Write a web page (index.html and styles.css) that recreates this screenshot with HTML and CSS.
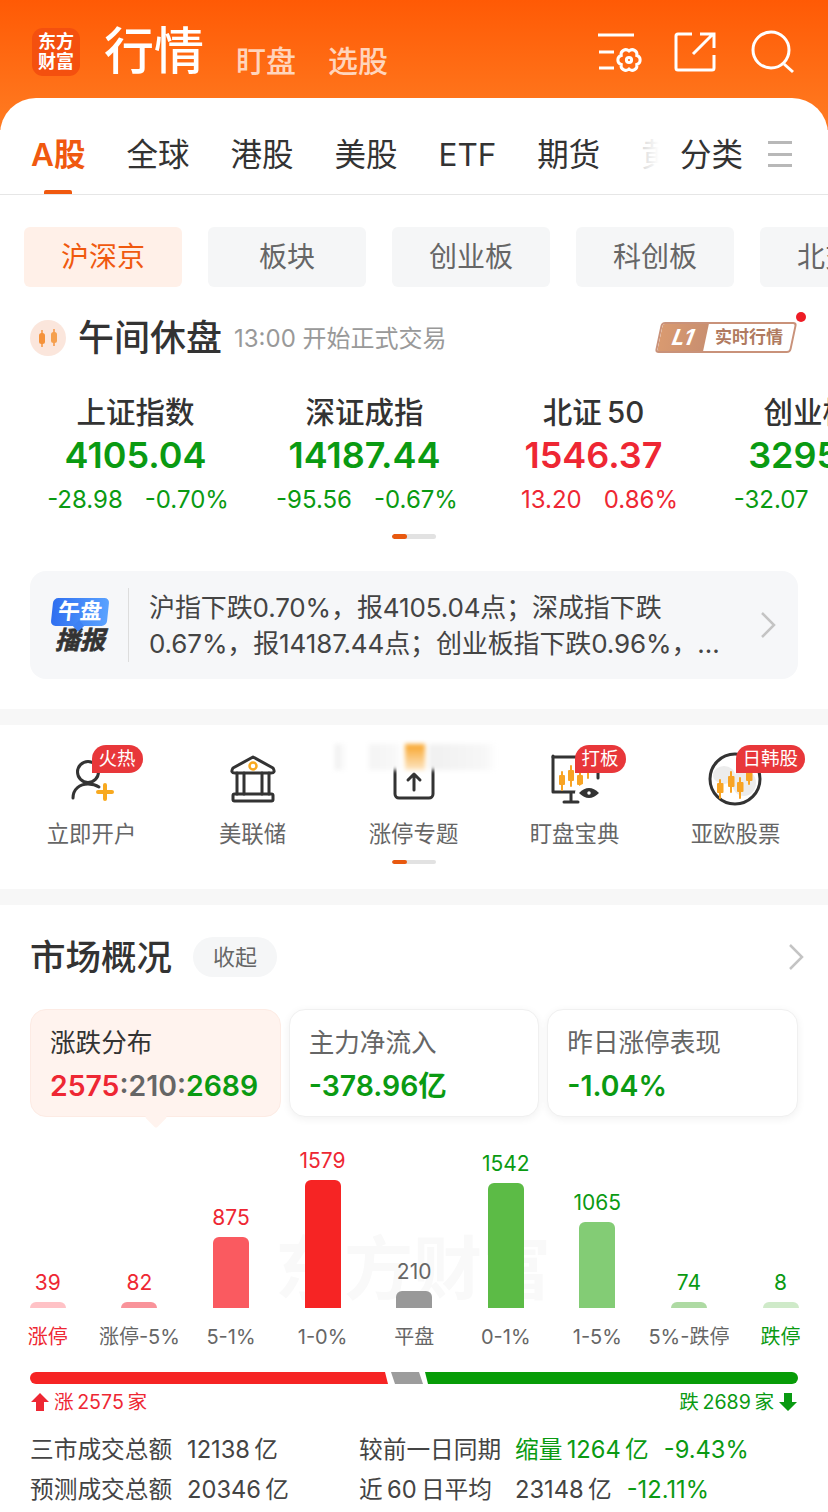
FILE: index.html
```html
<!DOCTYPE html>
<html lang="zh-CN">
<head>
  <meta charset="UTF-8" />
  <meta name="viewport" content="width=device-width, initial-scale=1.0" />
  <title>行情</title>
  <link rel="stylesheet" href="styles.css">
</head>
<body>
  <header class="top">
    <div class="logo">东方<br>财富</div>
    <h1>行情</h1>
    <a class="top-link first">盯盘</a>
    <a class="top-link">选股</a>
    <div class="top-icons">
      <svg viewBox="0 0 46 44" class="top-icon"><path d="M2 5H38M3 22H18M3 38H18"/><path d="M40.8 25.5A4.7 4.7 0 0 1 40.8 34.5A4.7 4.7 0 0 1 33 39A4.7 4.7 0 0 1 25.2 34.5A4.7 4.7 0 0 1 25.2 25.5A4.7 4.7 0 0 1 33 21A4.7 4.7 0 0 1 40.8 25.5Z"/><circle cx="33" cy="30" r="2.6"/></svg>
      <svg viewBox="0 0 46 44" class="top-icon"><path d="M19 4H5a2 2 0 0 0-2 2V38a2 2 0 0 0 2 2H39a2 2 0 0 0 2-2V25"/><path d="M20 24L40 4M27 4H41V18"/></svg>
      <svg viewBox="0 0 46 44" class="top-icon"><circle cx="21" cy="20" r="18"/><path d="M34 34L43 42"/></svg>
    </div>
  </header>

  <main class="panel">
    <nav class="tabs">
      <div class="tab-scroll">
        <a class="tab active">A股</a>
        <a class="tab">全球</a>
        <a class="tab">港股</a>
        <a class="tab">美股</a>
        <a class="tab">ETF</a>
        <a class="tab">期货</a>
        <a class="tab">黄金</a>
      </div>
      <a class="tab tab-fixed">分类</a>
      <div class="tab-menu"><i></i><i></i><i></i></div>
    </nav>

    <div class="chips">
      <a class="chip active">沪深京</a>
      <a class="chip">板块</a>
      <a class="chip">创业板</a>
      <a class="chip">科创板</a>
      <a class="chip">北交所</a>
    </div>

    <div class="status">
      <svg class="status-icon" viewBox="0 0 36 36">
        <circle cx="18" cy="18" r="18" fill="#fbe6dc"/>
        <path d="M12 10V27M24 9V26" stroke="#f59a4a" stroke-width="1.6"/>
        <rect x="9" y="13" width="6" height="11" rx="2.5" fill="#f5923a"/>
        <rect x="21" y="12" width="6" height="11" rx="2.5" fill="#f5a04e"/>
      </svg>
      <span class="status-title">午间休盘</span>
      <span class="status-note">13:00 开始正式交易</span>
      <div class="l1-tag">
        <div class="l1-box">
          <b class="l1-left">L1</b>
          <span class="l1-right">实时行情</span>
        </div>
        <i class="l1-dot"></i>
      </div>
    </div>

    <div class="indices">
      <div class="index green">
        <div class="index-name">上证指数</div>
        <div class="index-value">4105.04</div>
        <div class="index-change"><span>-28.98</span><span>-0.70%</span></div>
      </div>
      <div class="index green">
        <div class="index-name">深证成指</div>
        <div class="index-value">14187.44</div>
        <div class="index-change"><span>-95.56</span><span>-0.67%</span></div>
      </div>
      <div class="index red">
        <div class="index-name">北证&thinsp;50</div>
        <div class="index-value">1546.37</div>
        <div class="index-change"><span>13.20</span><span>0.86%</span></div>
      </div>
      <div class="index green">
        <div class="index-name">创业板指</div>
        <div class="index-value">3295.48</div>
        <div class="index-change"><span>-32.07</span><span>-0.96%</span></div>
      </div>
    </div>
    <div class="pager"><i></i></div>

    <div class="report">
      <div class="report-logo">
        <div class="report-top">午盘</div>
        <div class="report-bottom">播报</div>
      </div>
      <p class="report-text">沪指下跌0.70%，报4105.04点；深成指下跌<br>0.67%，报14187.44点；创业板指下跌0.96%，…</p>
      <svg class="chevron" viewBox="0 0 16 28"><path d="M2 2L14 14L2 26"/></svg>
    </div>

    <div class="band"></div>

    <section class="shortcuts">
      <div class="blur-strip"></div>
      <div class="shortcut-row">
        <div class="shortcut">
          <div class="icon-box">
            <svg viewBox="0 0 64 60" class="sc-icon">
              <circle cx="28" cy="24" r="10.5"/>
              <path d="M13 50c0-9 7-14 15-14 4 0 8 1 11 3"/>
              <path class="orange" d="M45 37V51M38 44H52"/>
            </svg>
            <span class="badge">火热</span>
          </div>
          <span class="sc-label">立即开户</span>
        </div>
        <div class="shortcut">
          <div class="icon-box">
            <svg viewBox="0 0 64 60" class="sc-icon">
              <path d="M32 9L52 20Q55 25 50 25H14Q9 25 12 20Z"/>
              <circle class="orange thin" cx="32" cy="18" r="3.5"/>
              <path d="M16 25V46M23 25V46M41 25V46M48 25V46"/>
              <rect x="12" y="46" width="40" height="7" rx="1.5"/>
            </svg>
          </div>
          <span class="sc-label">美联储</span>
        </div>
        <div class="shortcut">
          <div class="icon-box">
            <svg viewBox="0 0 64 60" class="sc-icon">
              <rect x="13" y="4" width="38" height="46" rx="4"/>
              <path d="M32 42V26M26 32L32 26L38 32"/>
            </svg>
          </div>
          <span class="sc-label">涨停专题</span>
        </div>
        <div class="shortcut">
          <div class="icon-box">
            <svg viewBox="0 0 64 60" class="sc-icon">
              <path d="M10 8V44H36M55 8V30M28 44V53M21 54H35"/>
              <path d="M10 9H52"/>
              <g class="candles">
                <path d="M19 24V42M28 18V38M37 22V42M45 18V30"/>
                <rect x="16" y="27" width="6" height="10" rx="1"/>
                <rect x="25" y="22" width="6" height="11" rx="1"/>
                <rect x="34" y="27" width="6" height="10" rx="1"/>
              </g>
              <ellipse cx="46" cy="45" rx="14" ry="10" class="eye-halo"/>
              <path class="eye" d="M36 45Q46 35 56 45Q46 55 36 45Z"/>
              <circle cx="46" cy="45" r="2.5" class="eye-dot"/>
            </svg>
            <span class="badge">打板</span>
          </div>
          <span class="sc-label">盯盘宝典</span>
        </div>
        <div class="shortcut">
          <div class="icon-box">
            <svg viewBox="0 0 64 60" class="sc-icon">
              <circle cx="31" cy="31" r="25"/>
              <g class="map">
                <ellipse cx="20" cy="27" rx="11" ry="9"/>
                <ellipse cx="40" cy="35" rx="12" ry="13"/>
              </g>
              <g class="candles">
                <path d="M16 32V50M27 24V44M36 30V50M45 22V36"/>
                <rect x="13" y="35" width="6.5" height="10" rx="1"/>
                <rect x="24" y="28" width="6.5" height="11" rx="1"/>
                <rect x="33" y="34" width="6.5" height="10" rx="1"/>
                <rect x="42" y="24" width="6.5" height="9" rx="1"/>
              </g>
            </svg>
            <span class="badge">日韩股</span>
          </div>
          <span class="sc-label">亚欧股票</span>
        </div>
      </div>
      <div class="pager small"><i></i></div>
    </section>

    <div class="band"></div>

    <section class="market">
      <div class="market-head">
        <h2>市场概况</h2>
        <a class="collapse">收起</a>
        <svg class="chevron" viewBox="0 0 16 28"><path d="M2 2L14 14L2 26"/></svg>
      </div>

      <div class="cards">
        <div class="card active">
          <div class="card-label">涨跌分布</div>
          <div class="card-value"><span class="c-red">2575</span><span class="c-gray">:210:</span><span class="c-green">2689</span></div>
        </div>
        <div class="card">
          <div class="card-label">主力净流入</div>
          <div class="card-value c-green">-378.96亿</div>
        </div>
        <div class="card">
          <div class="card-label">昨日涨停表现</div>
          <div class="card-value c-green">-1.04%</div>
        </div>
      </div>

      <div class="chart">
        <div class="watermark">东方财富</div>
        <div class="col c-red"><b>39</b><i class="bar" style="height:6px;background:#ffc2c6"></i><span>涨停</span></div>
        <div class="col c-red"><b>82</b><i class="bar" style="height:6px;background:#f9939a"></i><span class="c-gray">涨停-5%</span></div>
        <div class="col c-red"><b>875</b><i class="bar" style="height:71px;background:#fa5a60"></i><span class="c-gray">5-1%</span></div>
        <div class="col c-red"><b>1579</b><i class="bar" style="height:128px;background:#f62424"></i><span class="c-gray">1-0%</span></div>
        <div class="col c-gray"><b>210</b><i class="bar" style="height:17px;background:#999999"></i><span>平盘</span></div>
        <div class="col c-green"><b>1542</b><i class="bar" style="height:125px;background:#5cbb46"></i><span class="c-gray">0-1%</span></div>
        <div class="col c-green"><b>1065</b><i class="bar" style="height:86px;background:#83cc75"></i><span class="c-gray">1-5%</span></div>
        <div class="col c-green"><b>74</b><i class="bar" style="height:6px;background:#aedaa3"></i><span class="c-gray">5%-跌停</span></div>
        <div class="col c-green"><b>8</b><i class="bar" style="height:6px;background:#cfeac9"></i><span>跌停</span></div>
      </div>

      <div class="ratio">
        <i class="ratio-red"></i>
        <i class="ratio-gray"></i>
        <i class="ratio-green"></i>
      </div>
      <div class="legend">
        <span class="c-red legend-item">
          <svg viewBox="0 0 18 18"><path d="M9 0L18 9H13V18H5V9H0Z"/></svg>涨&thinsp;2575&thinsp;家
        </span>
        <span class="c-green legend-item">
          跌&thinsp;2689&thinsp;家<svg viewBox="0 0 18 18"><path d="M9 18L18 9H13V0H5V9H0Z"/></svg>
        </span>
      </div>

      <div class="stats">
        <span>三市成交总额</span>
        <span>12138&thinsp;亿</span>
        <span>较前一日同期</span>
        <span class="c-green">缩量&thinsp;1264&thinsp;亿<em>-9.43%</em></span>
        <span>预测成交总额</span>
        <span>20346&thinsp;亿</span>
        <span>近&thinsp;60&thinsp;日平均</span>
        <span>23148&thinsp;亿<em class="c-green">-12.11%</em></span>
      </div>
    </section>
  </main>
</body>
</html>
```

FILE: styles.css
```css
* {
  box-sizing: border-box;
}
body {
  font-family: Inter, "Noto Sans CJK SC", sans-serif;
  background-color: #ffffff;
  color: #333333;
  margin: 0;
  width: 828px;
  height: 1512px;
  overflow: hidden;
}
i, em {
  font-style: normal;
}
.c-red { color: #ee2733; }
.c-green { color: #0a9a12; }
.c-gray { color: #666666; }

/* top orange bar */
.top {
  height: 130px;
  padding: 28px 32px 0;
  display: flex;
  align-items: flex-start;
  background: linear-gradient(180deg, #ff5a05 0%, #ff7c22 100%);
  color: white;
}
.logo {
  width: 48px;
  height: 48px;
  border-radius: 11px;
  background-color: #f4500f;
  font-size: 18px;
  line-height: 20px;
  font-weight: 700;
  text-align: center;
  padding-top: 4px;
  margin-right: 24px;
}
.top h1 {
  font-size: 50px;
  line-height: 46px;
  font-weight: 500;
  margin: 0 32px 0 0;
}
.top-link {
  font-size: 30px;
  line-height: 40px;
  margin: 13px 32px 0 0;
  color: rgba(255, 255, 255, 0.72);
  font-weight: 500;
}
.top-icons {
  margin-left: auto;
  margin-top: 2px;
  display: flex;
  gap: 31px;
}
.top-icon {
  width: 46px;
  height: 44px;
  fill: none;
  stroke: white;
  stroke-width: 3;
}

.panel {
  margin-top: -32px;
  background-color: white;
  border-radius: 36px 36px 0 0;
  position: relative;
}

/* tabs */
.tabs {
  height: 97px;
  padding: 0 36px 0 31px;
  border-bottom: 1px solid #e6e6e6;
  display: flex;
  align-items: flex-start;
}
.tab-scroll {
  width: 628px;
  display: flex;
  gap: 41px;
  overflow: hidden;
  position: relative;
  flex-shrink: 0;
}
.tab-scroll::after {
  content: "";
  position: absolute;
  right: 0;
  top: 0;
  width: 24px;
  height: 100%;
  background: linear-gradient(90deg, rgba(255, 255, 255, 0.75), #ffffff);
}
.tab {
  font-size: 31.5px;
  line-height: 46px;
  padding-top: 34px;
  height: 96px;
  white-space: nowrap;
  flex-shrink: 0;
  color: #333333;
  position: relative;
}
.tab.active {
  color: #f0590f;
  font-weight: 600;
}
.tab.active::after {
  content: "";
  position: absolute;
  left: 13px;
  bottom: 0;
  width: 28px;
  height: 4px;
  border-radius: 2px 2px 0 0;
  background-color: #f0590f;
}
.tab-fixed {
  margin-left: 21px;
}
.tab-menu {
  margin-left: 25px;
  margin-top: 43px;
  width: 24px;
  height: 26px;
  display: flex;
  flex-direction: column;
  justify-content: space-between;
}
.tab-menu i {
  height: 3px;
  background-color: #b8b8b8;
}

/* filter chips */
.chips {
  margin-top: 32px;
  padding-left: 24px;
  height: 60px;
  display: flex;
  gap: 26px;
  overflow: hidden;
}
.chip {
  flex: 0 0 158px;
  height: 60px;
  line-height: 60px;
  border-radius: 6px;
  background-color: #f5f6f7;
  color: #666666;
  font-size: 28px;
  text-align: center;
}
.chip.active {
  background-color: #fff0e8;
  color: #f0590f;
}

/* status row */
.status {
  margin-top: 21px;
  height: 60px;
  padding: 0 30px;
  display: flex;
  align-items: center;
}
.status-icon {
  width: 36px;
  height: 36px;
  margin-right: 12px;
}
.status-title {
  font-size: 36px;
  line-height: 56px;
  font-weight: 500;
  margin-right: 12px;
}
.status-note {
  font-size: 24px;
  line-height: 36px;
  padding-top: 1px;
  color: #999999;
}
.l1-tag {
  margin-left: auto;
  margin-right: 1px;
  margin-bottom: 2px;
  position: relative;
  width: 140px;
  height: 31px;
}
.l1-box {
  width: 136px;
  height: 31px;
  transform: skewX(-12deg);
  margin-left: 1px;
  border: 2px solid #c9927a;
  border-radius: 4px;
  display: flex;
  overflow: hidden;
}
.l1-left {
  width: 46px;
  background: linear-gradient(90deg, #d99a70, #c98f70);
  color: white;
  font-size: 22px;
  line-height: 27px;
  text-align: center;
  font-style: italic;
}
.l1-right {
  flex: 1;
  font-size: 17px;
  font-weight: 700;
  line-height: 27px;
  color: #b07a60;
  text-align: center;
  transform: skewX(12deg);
}
.l1-dot {
  position: absolute;
  right: -9px;
  top: -10px;
  width: 10px;
  height: 10px;
  border-radius: 50%;
  background-color: #ee1c25;
}

/* index row */
.indices {
  margin-top: 25px;
  padding-left: 21px;
  display: flex;
  overflow: hidden;
}
.index {
  flex: 0 0 229px;
  text-align: center;
  white-space: nowrap;
}
.index-name {
  font-size: 29.5px;
  line-height: 38px;
  margin-bottom: 2px;
  font-weight: 500;
}
.index-value {
  font-size: 36px;
  line-height: 44px;
  font-weight: 600;
}
.index-change {
  font-size: 24px;
  line-height: 42px;
  margin-top: 2px;
  padding-left: 5px;
  display: flex;
  justify-content: center;
  gap: 22px;
}
.index.green .index-value, .index.green .index-change { color: #0a9a12; }
.index.red .index-value, .index.red .index-change { color: #ee2733; }
.index.red .index-change { padding-left: 12px; }

.pager {
  width: 44px;
  height: 5px;
  margin: 13px auto 0;
  border-radius: 3px;
  background-color: #e2e2e2;
  overflow: hidden;
}
.pager i {
  display: block;
  width: 15px;
  height: 100%;
  border-radius: 3px;
  background-color: #e8590f;
}
.pager.small {
  height: 4px;
  margin-top: 0;
}

/* report card */
.report {
  margin: 32px 30px 0;
  height: 108px;
  border-radius: 16px;
  background-color: #f6f7f9;
  padding: 0 22px;
  display: flex;
  align-items: center;
}
.report-logo {
  width: 56px;
  margin-right: 20px;
  text-align: center;
}
.report-top {
  height: 28px;
  line-height: 27px;
  font-size: 22px;
  font-weight: 700;
  color: white;
  border-radius: 5px;
  background: linear-gradient(90deg, #2f6ff0, #5aa2ff);
  transform: skewX(-6deg);
  position: relative;
}
.report-top::after {
  content: "";
  position: absolute;
  left: 24px;
  bottom: -4px;
  width: 8px;
  height: 8px;
  background-color: #3f82f4;
  transform: rotate(45deg);
}
.report-bottom {
  margin-top: 2px;
  font-size: 25px;
  line-height: 24px;
  font-weight: 700;
  font-style: italic;
  color: #333333;
  -webkit-text-stroke: 0.6px #333333;
}
.report-text {
  margin: 0;
  border-left: 1px solid #dddddd;
  padding: 2px 0 0 20px;
  font-size: 26px;
  line-height: 36px;
  letter-spacing: -0.12px;
  color: #444444;
  white-space: nowrap;
  flex: 1;
}
.chevron {
  width: 16px;
  height: 28px;
  flex-shrink: 0;
  fill: none;
  stroke: #c4c4c4;
  stroke-width: 2.5;
}

.band {
  height: 16px;
  background-color: #f7f7f7;
}
.report + .band {
  margin-top: 30px;
}

/* shortcuts */
.shortcuts {
  height: 164px;
  padding-top: 23px;
  position: relative;
}
.blur-strip {
  position: absolute;
  left: 335px;
  top: 19px;
  width: 162px;
  height: 26px;
  filter: blur(2px);
  background:
    linear-gradient(#f8a52a, #fde6c4) 70px 0 / 20px 100% no-repeat,
    linear-gradient(90deg, #eeeeee 0, #ffffff 12px, #ffffff 32px, #f4f4f4 36px, #f8f8f8 60px, #ffffff 68px, #ffffff 92px, #f0f0f0 96px, #f7f7f7 150px, #ffffff 162px);
  z-index: 1;
}
.shortcut-row {
  padding-left: 11px;
  display: flex;
}
.shortcut {
  flex: 0 0 161px;
  display: flex;
  flex-direction: column;
  align-items: center;
}
.icon-box {
  width: 64px;
  height: 60px;
  position: relative;
}
.sc-icon {
  width: 64px;
  height: 60px;
  fill: none;
  stroke: #333333;
  stroke-width: 3;
  stroke-linecap: round;
  stroke-linejoin: round;
}
.sc-icon .orange {
  stroke: #f8a91f;
  stroke-width: 4;
}
.sc-icon .thin {
  stroke-width: 2.5;
}
.candles path {
  stroke: #f8a424;
  stroke-width: 2;
}
.candles rect {
  fill: #f8a424;
  stroke: none;
}
.map ellipse {
  fill: #ececec;
  stroke: none;
}
.eye-halo {
  fill: white;
  stroke: none;
}
.eye {
  fill: #333333;
  stroke: none;
}
.eye-dot {
  fill: white;
  stroke: #333333;
  stroke-width: 1.5;
}
.badge {
  position: absolute;
  left: 32px;
  top: -3px;
  height: 28px;
  line-height: 27px;
  padding: 0 7px;
  font-size: 18.5px;
  color: white;
  white-space: nowrap;
  background-color: #e8373a;
  border-radius: 14px 14px 14px 0;
}
.sc-label {
  margin-top: 11px;
  font-size: 22.4px;
  line-height: 30px;
  height: 30px;
  color: #666666;
}
.shortcuts .pager {
  margin-top: 11px;
}

/* market overview */
.market-head {
  margin-top: 32px;
  padding: 0 24px 0 30px;
  height: 40px;
  display: flex;
  align-items: center;
}
.market-head h2 {
  margin: 0 21px 0 0;
  padding-top: 1px;
  font-size: 35.5px;
  font-weight: 500;
  line-height: 40px;
}
.collapse {
  width: 84px;
  height: 40px;
  line-height: 40px;
  border-radius: 20px;
  background-color: #f5f6f7;
  color: #666666;
  font-size: 22px;
  text-align: center;
}
.market-head .chevron {
  margin-left: auto;
}

.cards {
  margin-top: 32px;
  padding: 0 30px;
  display: grid;
  grid-template-columns: repeat(3, 1fr);
  gap: 8px;
}
.card {
  height: 108px;
  padding: 16px 19px 0;
  border-radius: 16px;
  border: 1px solid #f0f0f0;
  background-color: white;
  box-shadow: 0 2px 8px rgba(0, 0, 0, 0.06);
  position: relative;
}
.card.active {
  background-color: #fff3ee;
  border-color: #fdebe4;
  box-shadow: none;
}
.card.active::after {
  content: "";
  position: absolute;
  left: 117px;
  bottom: -9px;
  width: 16px;
  height: 16px;
  background-color: #fff3ee;
  transform: rotate(45deg);
  border-radius: 2px;
}
.card-label {
  font-size: 25.6px;
  line-height: 34px;
  color: #666666;
}
.card.active .card-label {
  color: #333333;
}
.card-value {
  margin-top: 8px;
  font-size: 28.4px;
  line-height: 36px;
  font-weight: 600;
  white-space: nowrap;
}

/* bar chart */
.chart {
  height: 233px;
  padding-left: 2px;
  display: grid;
  grid-template-columns: repeat(9, 91.6px);
  position: relative;
}
.watermark {
  position: absolute;
  left: 275px;
  top: 114px;
  font-size: 69px;
  line-height: 76px;
  font-weight: 700;
  color: #f9f9f9;
  white-space: nowrap;
}
.col {
  display: flex;
  flex-direction: column;
  align-items: center;
  justify-content: flex-end;
  position: relative;
}
.col b {
  font-size: 21px;
  line-height: 24px;
  font-weight: 400;
  margin-bottom: 7px;
}
.col .bar {
  width: 36px;
  border-radius: 6px 6px 0 0;
}
.col span {
  margin-top: 14px;
  height: 28px;
  padding-top: 1px;
  font-size: 20px;
  line-height: 28px;
  white-space: nowrap;
}

/* up/down ratio */
.ratio {
  margin: 22px 30px 0;
  height: 12px;
  display: flex;
}
.ratio-red {
  width: 358px;
  background-color: #f62424;
  border-radius: 6px 0 0 6px;
  clip-path: polygon(0 0, 355px 0, 358px 100%, 0 100%);
}
.ratio-gray {
  width: 32px;
  margin-left: 3px;
  background-color: #9c9c9c;
  clip-path: polygon(0 0, 28px 0, 32px 100%, 4px 100%);
}
.ratio-green {
  flex: 1;
  margin-left: 2px;
  background-color: #079c07;
  border-radius: 0 6px 6px 0;
  clip-path: polygon(0 0, 100% 0, 100% 100%, 3px 100%);
}
.legend {
  margin-top: 4px;
  padding: 0 31px;
  height: 28px;
  display: flex;
  justify-content: space-between;
}
.legend-item {
  font-size: 19.6px;
  line-height: 28px;
  display: flex;
  align-items: center;
  gap: 5px;
}
.legend-item svg {
  width: 18px;
  height: 18px;
  fill: currentColor;
}

.stats {
  margin-top: 14px;
  padding-left: 30px;
  display: grid;
  grid-template-columns: 157px 172px 156px 1fr;
  grid-auto-rows: 40px;
  font-size: 23.7px;
  line-height: 40px;
  white-space: nowrap;
  color: #444444;
}
.stats em {
  margin-left: 15px;
}
```
